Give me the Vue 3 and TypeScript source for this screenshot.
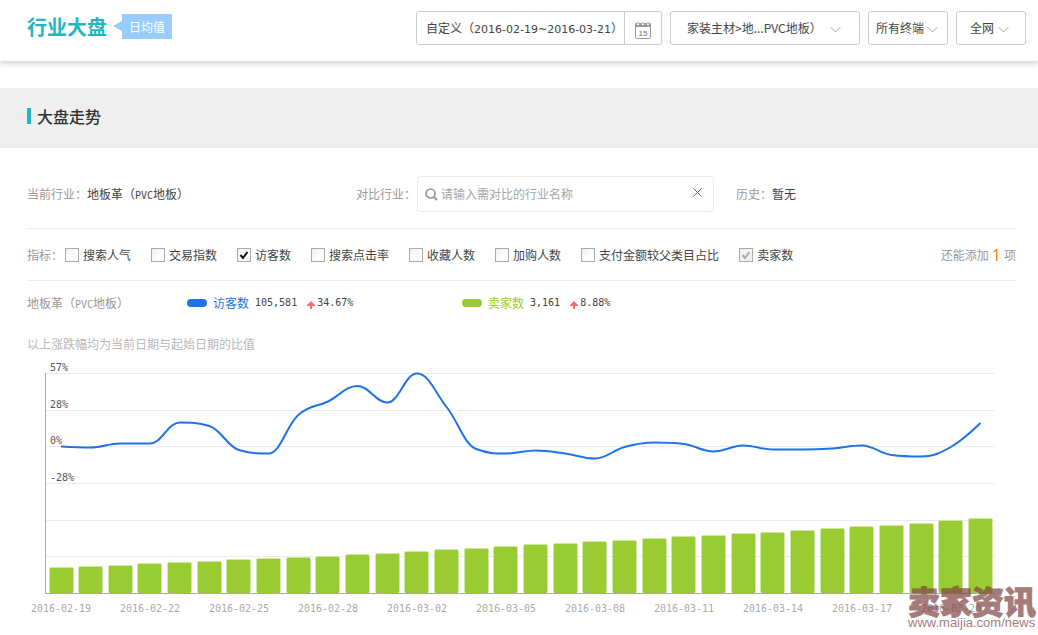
<script setup lang="ts">
import { ref } from 'vue'

interface Metric {
  id: string
  label: string
  checked: boolean
  disabled?: boolean
}

const keyword = ref('')

const metrics = ref<Metric[]>([
  { id: 'popularity', label: '搜索人气', checked: false },
  { id: 'trade', label: '交易指数', checked: false },
  { id: 'visitors', label: '访客数', checked: true },
  { id: 'ctr', label: '搜索点击率', checked: false },
  { id: 'favorites', label: '收藏人数', checked: false },
  { id: 'cart', label: '加购人数', checked: false },
  { id: 'share', label: '支付金额较父类目占比', checked: false },
  { id: 'sellers', label: '卖家数', checked: true, disabled: true },
])

const legend = [
  { id: 'visitors', label: '访客数', value: '105,581', change: '34.67%' },
  { id: 'sellers', label: '卖家数', value: '3,161', change: '8.88%' },
]

const step = 29.66
const baseline = 233

const gridLines = [13, 50, 86, 123, 160, 196]
const yLabels = [
  { text: '57%', y: 11 },
  { text: '28%', y: 48 },
  { text: '0%', y: 84 },
  { text: '-28%', y: 121 },
]
const dates = [
  '2016-02-19', '2016-02-22', '2016-02-25', '2016-02-28', '2016-03-02', '2016-03-05',
  '2016-03-08', '2016-03-11', '2016-03-14', '2016-03-17', '2016-03-20',
]

const sellerHeights = [
  26, 27, 28, 30, 31, 32, 34, 35, 36, 37, 39, 40, 42, 44, 45, 47,
  49, 50, 52, 53, 55, 57, 58, 60, 61, 63, 65, 67, 68, 70, 73, 75,
]
const bars = sellerHeights.map((h, i) => ({ x: Math.floor(49 + i * step), y: baseline - h, h }))

const visitorLevels = [
  86.5, 87.5, 83.5, 83.5, 62.5, 66, 90, 93.5, 55, 41.5, 26, 42.5, 13.5, 47, 89, 93.5,
  90.5, 93.5, 98.5, 87, 82.5, 84, 91.5, 85.5, 89.5, 89.5, 88.5, 85.5, 95, 96.5, 87, 63,
]

// Smoothed curve whose control points never overshoot the neighbouring values
function spline(values: number[]): string {
  const pts = values.map((y, i) => ({ x: 61 + i * step, y }))
  let d = `M${pts[0].x} ${pts[0].y}`
  let out = { ...pts[0] }
  for (let i = 1; i < pts.length; i++) {
    const prev = pts[i - 1]
    const p = pts[i]
    const next = pts[i + 1]
    let left = { ...p }
    let right = { ...p }
    if (next) {
      left = { x: (1.5 * p.x + prev.x) / 2.5, y: (1.5 * p.y + prev.y) / 2.5 }
      right = { x: (1.5 * p.x + next.x) / 2.5, y: (1.5 * p.y + next.y) / 2.5 }
      const shift = ((right.y - left.y) * (right.x - p.x)) / (right.x - left.x) + p.y - right.y
      left.y += shift
      right.y += shift
      const clampLeft = Math.min(Math.max(left.y, Math.min(prev.y, p.y)), Math.max(prev.y, p.y))
      if (clampLeft !== left.y) {
        left.y = clampLeft
        right.y = 2 * p.y - left.y
      }
      const clampRight = Math.min(Math.max(right.y, Math.min(next.y, p.y)), Math.max(next.y, p.y))
      if (clampRight !== right.y) {
        right.y = clampRight
        left.y = 2 * p.y - right.y
      }
    }
    d += ` C${out.x} ${out.y} ${left.x} ${left.y} ${p.x} ${p.y}`
    out = right
  }
  return d
}
const visitorPath = spline(visitorLevels)
</script>

<template>
  <div class="page">
    <header class="topbar">
      <h1>行业大盘</h1>
      <span class="badge">日均值</span>
      <div class="filters">
        <div class="date-group">
          <button type="button" class="date-text">自定义（<span class="date-range">2016-02-19~2016-03-21</span>）</button>
          <button type="button" class="date-icon" aria-label="选择日期">
            <svg width="16" height="17" viewBox="0 0 16 17">
              <rect x="0.500" y="3.500" width="15" height="13" rx="1" fill="none" stroke="#999" />
              <path d="M0 2Q0 1 1 1H2V3H4V1H7V3H9V1H12V3H14V1H15Q16 1 16 2V5H0Z" fill="#999" />
              <path d="M3 0V2M8 0V2M13 0V2" stroke="#999" />
              <text x="8" y="14" text-anchor="middle" class="cal-day">15</text>
            </svg>
          </button>
        </div>
        <div class="picker category">
          <select aria-label="类目"><option>家装主材&gt;地...PVC地板）</option></select>
          <svg width="11" height="7" viewBox="0 0 11 7"><path d="M.5 1L5.500 6L10.500 1" /></svg>
        </div>
        <div class="picker terminal">
          <select aria-label="终端"><option>所有终端</option></select>
          <svg width="11" height="7" viewBox="0 0 11 7"><path d="M.5 1L5.500 6L10.500 1" /></svg>
        </div>
        <div class="picker network">
          <select aria-label="范围"><option>全网</option></select>
          <svg width="11" height="7" viewBox="0 0 11 7"><path d="M.5 1L5.500 6L10.500 1" /></svg>
        </div>
      </div>
    </header>

    <section class="section-head"><h2>大盘走势</h2></section>

    <main>
      <div class="row industry">
        <div class="current">当前行业：<span class="strong">地板革（<span class="mono">PVC</span>地板）</span></div>
        <div class="compare">
          <label for="compare">对比行业：</label>
          <div class="search">
            <svg width="13" height="13" viewBox="0 0 13 13" fill="none" stroke="#999">
              <circle cx="5.500" cy="5.500" r="4.500" stroke-width="1.700" />
              <path d="M9 9L12 12" stroke-width="2" />
            </svg>
            <input id="compare" v-model="keyword" type="text" placeholder="请输入需对比的行业名称" />
            <button type="button" aria-label="清空" @click="keyword = ''">
              <svg width="9" height="9" viewBox="0 0 9 9"><path d="M.5 .5L8.500 8.500M8.500 .5L.5 8.500" stroke="#666" /></svg>
            </button>
          </div>
        </div>
        <div>历史：<span class="strong">暂无</span></div>
      </div>

      <div class="row metrics">
        <span>指标：</span>
        <div class="options">
          <label v-for="m in metrics" :key="m.id">
            <input v-model="m.checked" type="checkbox" :disabled="m.disabled" />
            <span class="box">
              <svg v-if="m.checked" width="10" height="10" viewBox="0 0 10 10"><path d="M1.500 5L4 8L8.500 2" /></svg>
            </span>
            {{ m.label }}
          </label>
        </div>
        <div class="remaining">还能添加<b>1</b>项</div>
      </div>

      <div class="row legend">
        <div class="subject">地板革（<span class="mono">PVC</span>地板）</div>
        <div v-for="item in legend" :key="item.id" class="series" :class="item.id">
          <i class="pill"></i>
          <span class="name">{{ item.label }}</span>
          <span class="mono value">{{ item.value }}</span>
          <svg width="8" height="8" viewBox="0 0 8 8"><path d="M4 0L8 4V5H5V8H3V5H0V4Z" fill="#ff6b6b" /></svg>
          <span class="mono">{{ item.change }}</span>
        </div>
      </div>

      <p class="note">以上涨跌幅均为当前日期与起始日期的比值</p>
    </main>

    <svg class="chart" viewBox="0 0 1038 275" role="img" aria-label="大盘走势">
      <rect v-for="y in gridLines" :key="y" x="46" :y="y" width="949" height="1" fill="#ebebeb" />
      <g v-for="b in bars" :key="b.x">
        <rect :x="b.x" :y="b.y" width="25" :height="b.h" rx="2" fill="#cfe89f" />
        <rect :x="b.x + 1" :y="b.y + 1" width="23" :height="b.h - 1" rx="1" fill="#99cc33" />
      </g>
      <rect x="45" y="13" width="1" height="220" fill="#aaa" />
      <rect x="45" y="233" width="950" height="1" fill="#aaa" />
      <path :d="visitorPath" class="line" />
      <text v-for="l in yLabels" :key="l.text" x="50" :y="l.y" class="y-label">{{ l.text }}</text>
      <text v-for="(d, i) in dates" :key="d" :x="61 + i * 89" y="252" class="x-label">{{ d }}</text>
    </svg>

    <div class="watermark">
      <strong>卖家资讯</strong>
      <span>www.maijia.com/news</span>
    </div>
  </div>
</template>

<style>
body {
  margin: 0;
  background: #fff;
}
</style>

<style scoped>
.page {
  position: relative;
  overflow: hidden;
  color: #444;
  font: 12px/18px "Noto Sans CJK SC", sans-serif;
}
.page * {
  box-sizing: border-box;
}
button, input, select {
  margin: 0;
  padding: 0;
  border: 0;
  background: none;
  color: inherit;
  font: inherit;
  outline: none;
}
.mono {
  font-family: "DejaVu Sans Mono", monospace;
  font-size: 10px;
  line-height: 12px;
}
.topbar {
  display: flex;
  align-items: flex-start;
  height: 61px;
  padding: 11px 12px 0 27px;
  box-shadow: 0 3px 5px rgba(0, 0, 0, 0.16);
}
h1 {
  margin: 0;
  color: #22b5c0;
  font-size: 20px;
  font-weight: 700;
  line-height: 32px;
}
.badge {
  position: relative;
  margin: 3px 0 0 15px;
  padding: 0 7px;
  background: #99ccff;
  color: #fff;
  line-height: 25px;
}
.badge::before {
  content: "";
  position: absolute;
  left: -9px;
  top: 7px;
  border: 5px solid transparent;
  border-right: 9px solid #99ccff;
  border-left: 0;
}
.filters {
  display: flex;
  gap: 8px;
  margin-left: auto;
}
.date-group, .picker {
  display: flex;
  height: 34px;
  border: 1px solid #ccc;
  border-radius: 3px;
}
.date-group {
  width: 246px;
}
.date-text {
  flex: 1;
  padding-left: 9px;
  text-align: left;
  white-space: nowrap;
}
.date-range {
  font: 11px "DejaVu Sans", sans-serif;
}
.date-icon {
  display: flex;
  justify-content: center;
  align-items: center;
  width: 37px;
  padding-top: 5px;
  border-left: 1px solid #ccc;
}
.cal-day {
  fill: #999;
  font: bold 8px "Liberation Sans", sans-serif;
}
.picker {
  position: relative;
}
.picker select {
  width: 100%;
  appearance: none;
}
.picker svg {
  position: absolute;
  top: 14px;
  right: 9px;
  pointer-events: none;
}
.picker path {
  fill: none;
  stroke: #aaa;
}
.category {
  width: 190px;
}
.category select {
  padding-left: 16px;
}
.category svg {
  right: 18px;
}
.terminal {
  width: 80px;
}
.terminal select {
  padding-left: 7px;
}
.network {
  width: 70px;
}
.network select {
  padding-left: 13px;
}
.network svg {
  right: 16px;
}
.section-head {
  display: flex;
  align-items: center;
  height: 60px;
  margin-top: 27px;
  padding: 0 27px 4px;
  background: #efefef;
}
h2 {
  margin: 0;
  padding-left: 6px;
  border-left: 4px solid #22b5c0;
  color: #333;
  font-size: 16px;
  font-weight: 500;
  line-height: 16px;
}
main {
  padding: 12px 22px 0 27px;
}
.row {
  display: flex;
  align-items: center;
  color: #999;
}
.strong {
  color: #444;
}
.industry {
  height: 69px;
  border-bottom: 1px dotted #ddd;
}
.current {
  width: 329px;
}
.compare {
  display: flex;
  align-items: center;
  width: 380px;
}
.search {
  display: flex;
  align-items: center;
  width: 297px;
  height: 36px;
  margin-left: 1px;
  padding: 0 11px 0 7px;
  border: 1px solid #eaeaea;
  border-radius: 4px;
}
.search input {
  flex: 1;
  min-width: 0;
  padding-left: 3px;
}
.search input::placeholder {
  color: #a5a5a5;
  opacity: 1;
}
.search button {
  display: flex;
  padding-bottom: 3px;
}
.metrics {
  height: 52px;
  border-bottom: 1px dotted #ddd;
}
.options {
  display: flex;
  gap: 20px;
  margin-left: 2px;
  color: #444;
  white-space: nowrap;
}
.options label {
  display: flex;
  align-items: center;
}
.options input {
  position: absolute;
  opacity: 0;
}
.box {
  display: flex;
  justify-content: center;
  align-items: center;
  width: 14px;
  height: 14px;
  margin-right: 4px;
  border: 1px solid #aaa;
  background: linear-gradient(135deg, #eee, #fff 60%);
}
.box path {
  fill: none;
  stroke: #111;
  stroke-width: 2;
}
input:disabled + .box {
  background: #f2f2f2;
}
input:disabled + .box path {
  stroke: #aaa;
}
.remaining {
  display: flex;
  align-items: center;
  margin-left: auto;
}
.remaining b {
  margin: 0 3px;
  color: #ff7a1a;
  font: 16px/16px "Open Sans", sans-serif;
}
.legend {
  height: 44px;
}
.subject {
  width: 160px;
}
.series {
  display: flex;
  align-items: center;
  width: 275px;
  color: #444;
}
.pill {
  width: 20px;
  height: 8px;
  margin-right: 6px;
  border-radius: 4px;
}
.value {
  margin: 0 10px 0 6px;
}
.series svg {
  margin: 4px 2px 0 0;
}
.visitors .pill {
  background: #1e73e8;
}
.visitors .name {
  color: #1e73e8;
}
.sellers .pill {
  background: #99cc33;
}
.sellers .name {
  color: #99cc33;
}
.note {
  margin: 10px 0 7px;
  color: #b8b8b8;
}
.chart {
  display: block;
  width: 100%;
  height: auto;
}
.line {
  fill: none;
  stroke: #1e73e8;
  stroke-width: 2;
}
.y-label, .x-label {
  font: 10px "DejaVu Sans Mono", monospace;
}
.y-label {
  fill: #555;
}
.x-label {
  fill: #aaa;
  text-anchor: middle;
}
.watermark {
  position: absolute;
  right: 0;
  bottom: 4px;
  width: 130px;
  color: #804444;
  opacity: 0.7;
  white-space: nowrap;
}
.watermark strong {
  display: block;
  font-size: 32px;
  font-weight: 900;
  line-height: 30px;
  -webkit-text-stroke: 1px #804444;
}
.watermark span {
  display: block;
  font: 13px/16px "Liberation Sans", sans-serif;
}
</style>
